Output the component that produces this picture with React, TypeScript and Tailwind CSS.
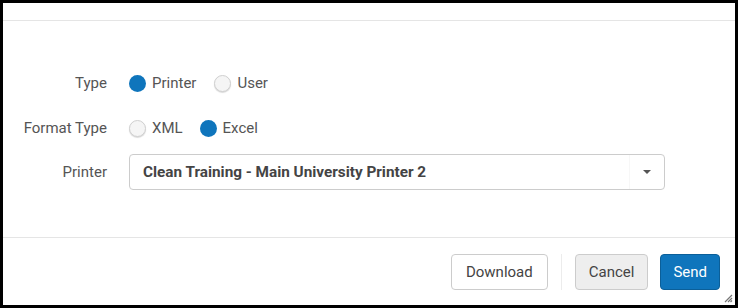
import React from "react";

function Radio({ checked }: { checked: boolean }) {
  return checked ? (
    <span className="inline-block w-[17px] h-[17px] rounded-full bg-[#0f75bc]" />
  ) : (
    <span className="inline-block w-[17px] h-[17px] rounded-full bg-[#f5f5f5] border border-[#d0d0d0] shadow-[0_1px_1px_rgba(0,0,0,0.15)]" />
  );
}

function Option({ checked, label }: { checked: boolean; label: string }) {
  return (
    <div className="flex items-center gap-[6px]">
      <Radio checked={checked} />
      <span className="text-[#555]">{label}</span>
    </div>
  );
}

export default function App() {
  return (
    <div
      className="w-[738px] h-[308px] border-[3px] border-black bg-white flex flex-col relative text-[15px]"
      style={{ fontFamily: "Roboto, 'Liberation Sans', sans-serif" }}
    >
      <div className="h-[18px] border-b border-[#e5e5e5] shrink-0" />
      <div className="flex-1 flex flex-col pt-[44px]">
        <div className="flex items-center h-[36px]">
          <div className="w-[104px] text-right text-[#555] pr-0">Type</div>
          <div className="ml-[22px] flex items-center gap-[18px]">
            <Option checked label="Printer" />
            <Option checked={false} label="User" />
          </div>
        </div>
        <div className="flex items-center h-[36px] mt-[9px]">
          <div className="w-[104px] text-right text-[#555]">Format Type</div>
          <div className="ml-[22px] flex items-center gap-[17px]">
            <Option checked={false} label="XML" />
            <Option checked label="Excel" />
          </div>
        </div>
        <div className="flex items-center h-[36px] mt-[8px]">
          <div className="w-[104px] text-right text-[#555]">Printer</div>
          <div className="ml-[22px] w-[536px] h-[36px] border border-[#ccc] rounded-[4px] flex items-center">
            <span className="flex-1 pl-[13px] font-bold text-[#444] text-[15.3px]">
              Clean Training - Main University Printer 2
            </span>
            <span className="w-[35px] h-full border-l border-[#f7f7f7] flex items-center justify-center">
              <svg width="8" height="4" viewBox="0 0 8 4">
                <path d="M0 0 L8 0 L4 4 Z" fill="#555" />
              </svg>
            </span>
          </div>
        </div>
      </div>
      <div className="h-[68px] border-t border-[#e5e5e5] shrink-0 flex items-center justify-end pr-[15px] pt-[1px]">
        <button className="h-[36px] px-[14px] rounded-[4px] border border-[#ccc] bg-white text-[#444]">
          Download
        </button>
        <div className="w-px h-[36px] bg-[#ececec] mx-[13px]" />
        <button className="h-[36px] px-[13px] rounded-[4px] border border-[#ccc] bg-[#eeeeee] text-[#444]">
          Cancel
        </button>
        <button className="ml-[12px] h-[36px] px-[12px] rounded-[4px] border border-[#0b5f99] bg-[#0f75bc] text-white">
          Send
        </button>
      </div>
      <svg className="absolute right-[2px] bottom-[2px]" width="9" height="9" viewBox="0 0 9 9">
        <path d="M8 1 L1 8 M8 4 L4 8 M8 6.5 L6.5 8" stroke="#777" strokeWidth="1.2" />
      </svg>
    </div>
  );
}
